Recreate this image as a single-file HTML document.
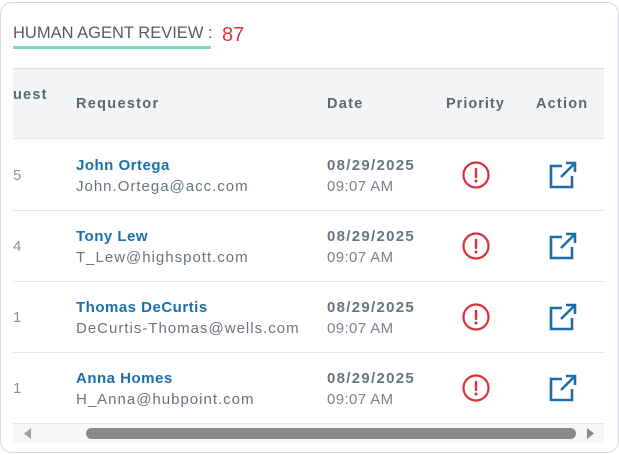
<!DOCTYPE html>
<html><head><style>
*{margin:0;padding:0;box-sizing:border-box}
body{width:619px;height:455px;background:#fff;font-family:"Liberation Sans",sans-serif;position:relative;overflow:hidden}
.card{position:absolute;left:0;top:2px;width:619px;height:451px;border:1px solid #d5d9e0;border-radius:12px;background:#fff}
.a{position:absolute;white-space:nowrap}
.hd{position:absolute;left:13px;top:68px;width:591px;height:71px;background:#f3f4f6;border-top:1px solid #d8dbe0;border-bottom:1px solid #e3e5e8}
.th{font-weight:bold;font-size:14.5px;color:#5f6673}
.row{position:absolute;left:13px;width:591px;height:1px;background:#e3e5e8}
.nm{font-weight:bold;font-size:15px;color:#1a6fa8;letter-spacing:0.5px}
.em{font-size:15px;color:#6b7280;letter-spacing:1px}
.dt{font-weight:bold;font-size:15px;color:#6b7280;letter-spacing:1.3px}
.tm{font-size:15px;color:#7b8190;letter-spacing:0.4px}
.id{font-size:15px;color:#8a909a}
</style></head><body>
<div class="card"></div>
<div class="a" style="left:13px;top:24px;font-size:16.5px;color:#555b66">HUMAN AGENT REVIEW :</div>
<div class="a" style="left:13px;top:46px;width:198px;height:3px;background:#7fd8b6"></div>
<div class="a" style="left:222px;top:24px;font-size:20px;color:#e0323c">87</div>
<div class="hd"></div>
<div class="a th" style="left:13px;top:87px;letter-spacing:1.2px">uest</div>
<div class="a th" style="left:76px;top:96px;letter-spacing:1.3px">Requestor</div>
<div class="a th" style="left:327px;top:96px;letter-spacing:1.3px">Date</div>
<div class="a th" style="left:446px;top:96px;letter-spacing:1px">Priority</div>
<div class="a th" style="left:536px;top:96px;letter-spacing:1.2px">Action</div>

<div class="a id" style="left:13px;top:167px">5</div>
<div class="a nm" style="left:76px;top:157px">John Ortega</div>
<div class="a em" style="left:76px;top:178px">John.Ortega@acc.com</div>
<div class="row" style="top:210px"></div>

<div class="a id" style="left:13px;top:238px">4</div>
<div class="a nm" style="left:76px;top:228px">Tony Lew</div>
<div class="a em" style="left:76px;top:249px">T_Lew@highspott.com</div>
<div class="row" style="top:281px"></div>

<div class="a id" style="left:13px;top:309px">1</div>
<div class="a nm" style="left:76px;top:299px">Thomas DeCurtis</div>
<div class="a em" style="left:76px;top:320px">DeCurtis-Thomas@wells.com</div>
<div class="row" style="top:352px"></div>

<div class="a id" style="left:13px;top:380px">1</div>
<div class="a nm" style="left:76px;top:370px">Anna Homes</div>
<div class="a em" style="left:76px;top:391px">H_Anna@hubpoint.com</div>
<div class="row" style="top:423px"></div>

<div class="a dt" style="left:327px;top:157px">08/29/2025</div><div class="a tm" style="left:327px;top:178px">09:07 AM</div>
<div class="a dt" style="left:327px;top:228px">08/29/2025</div><div class="a tm" style="left:327px;top:249px">09:07 AM</div>
<div class="a dt" style="left:327px;top:299px">08/29/2025</div><div class="a tm" style="left:327px;top:320px">09:07 AM</div>
<div class="a dt" style="left:327px;top:370px">08/29/2025</div><div class="a tm" style="left:327px;top:391px">09:07 AM</div>

<svg class="a" style="left:0;top:0" width="619" height="455">
<defs>
<g id="pr"><circle cx="0" cy="0" r="12.5" fill="none" stroke="#dc2f3a" stroke-width="2.2"/><line x1="0" y1="-6" x2="0" y2="2" stroke="#dc2f3a" stroke-width="2.4" stroke-linecap="round"/><circle cx="0" cy="6" r="1.5" fill="#dc2f3a"/></g>
<g id="ac" fill="none" stroke="#1a6fa8" stroke-width="2.6"><path d="M-1 -9 H-12 V12 H9 V1"/><path d="M-2 2 L11 -11"/><path d="M3 -12 H12 V-3"/></g>
</defs>
<use href="#pr" x="476" y="175"/><use href="#ac" x="563" y="175"/>
<use href="#pr" x="476" y="246"/><use href="#ac" x="563" y="246"/>
<use href="#pr" x="476" y="317"/><use href="#ac" x="563" y="317"/>
<use href="#pr" x="476" y="388"/><use href="#ac" x="563" y="388"/>
<rect x="13" y="424" width="591" height="19" fill="#f7f7f7"/>
<rect x="86" y="428" width="490" height="11" rx="5.5" fill="#8a8a8a"/>
<path d="M31 428 L24 433.5 L31 439Z" fill="#a0a0a0"/>
<path d="M587 428 L594 433.5 L587 439Z" fill="#8a8a8a"/>
</svg>
</body></html>
